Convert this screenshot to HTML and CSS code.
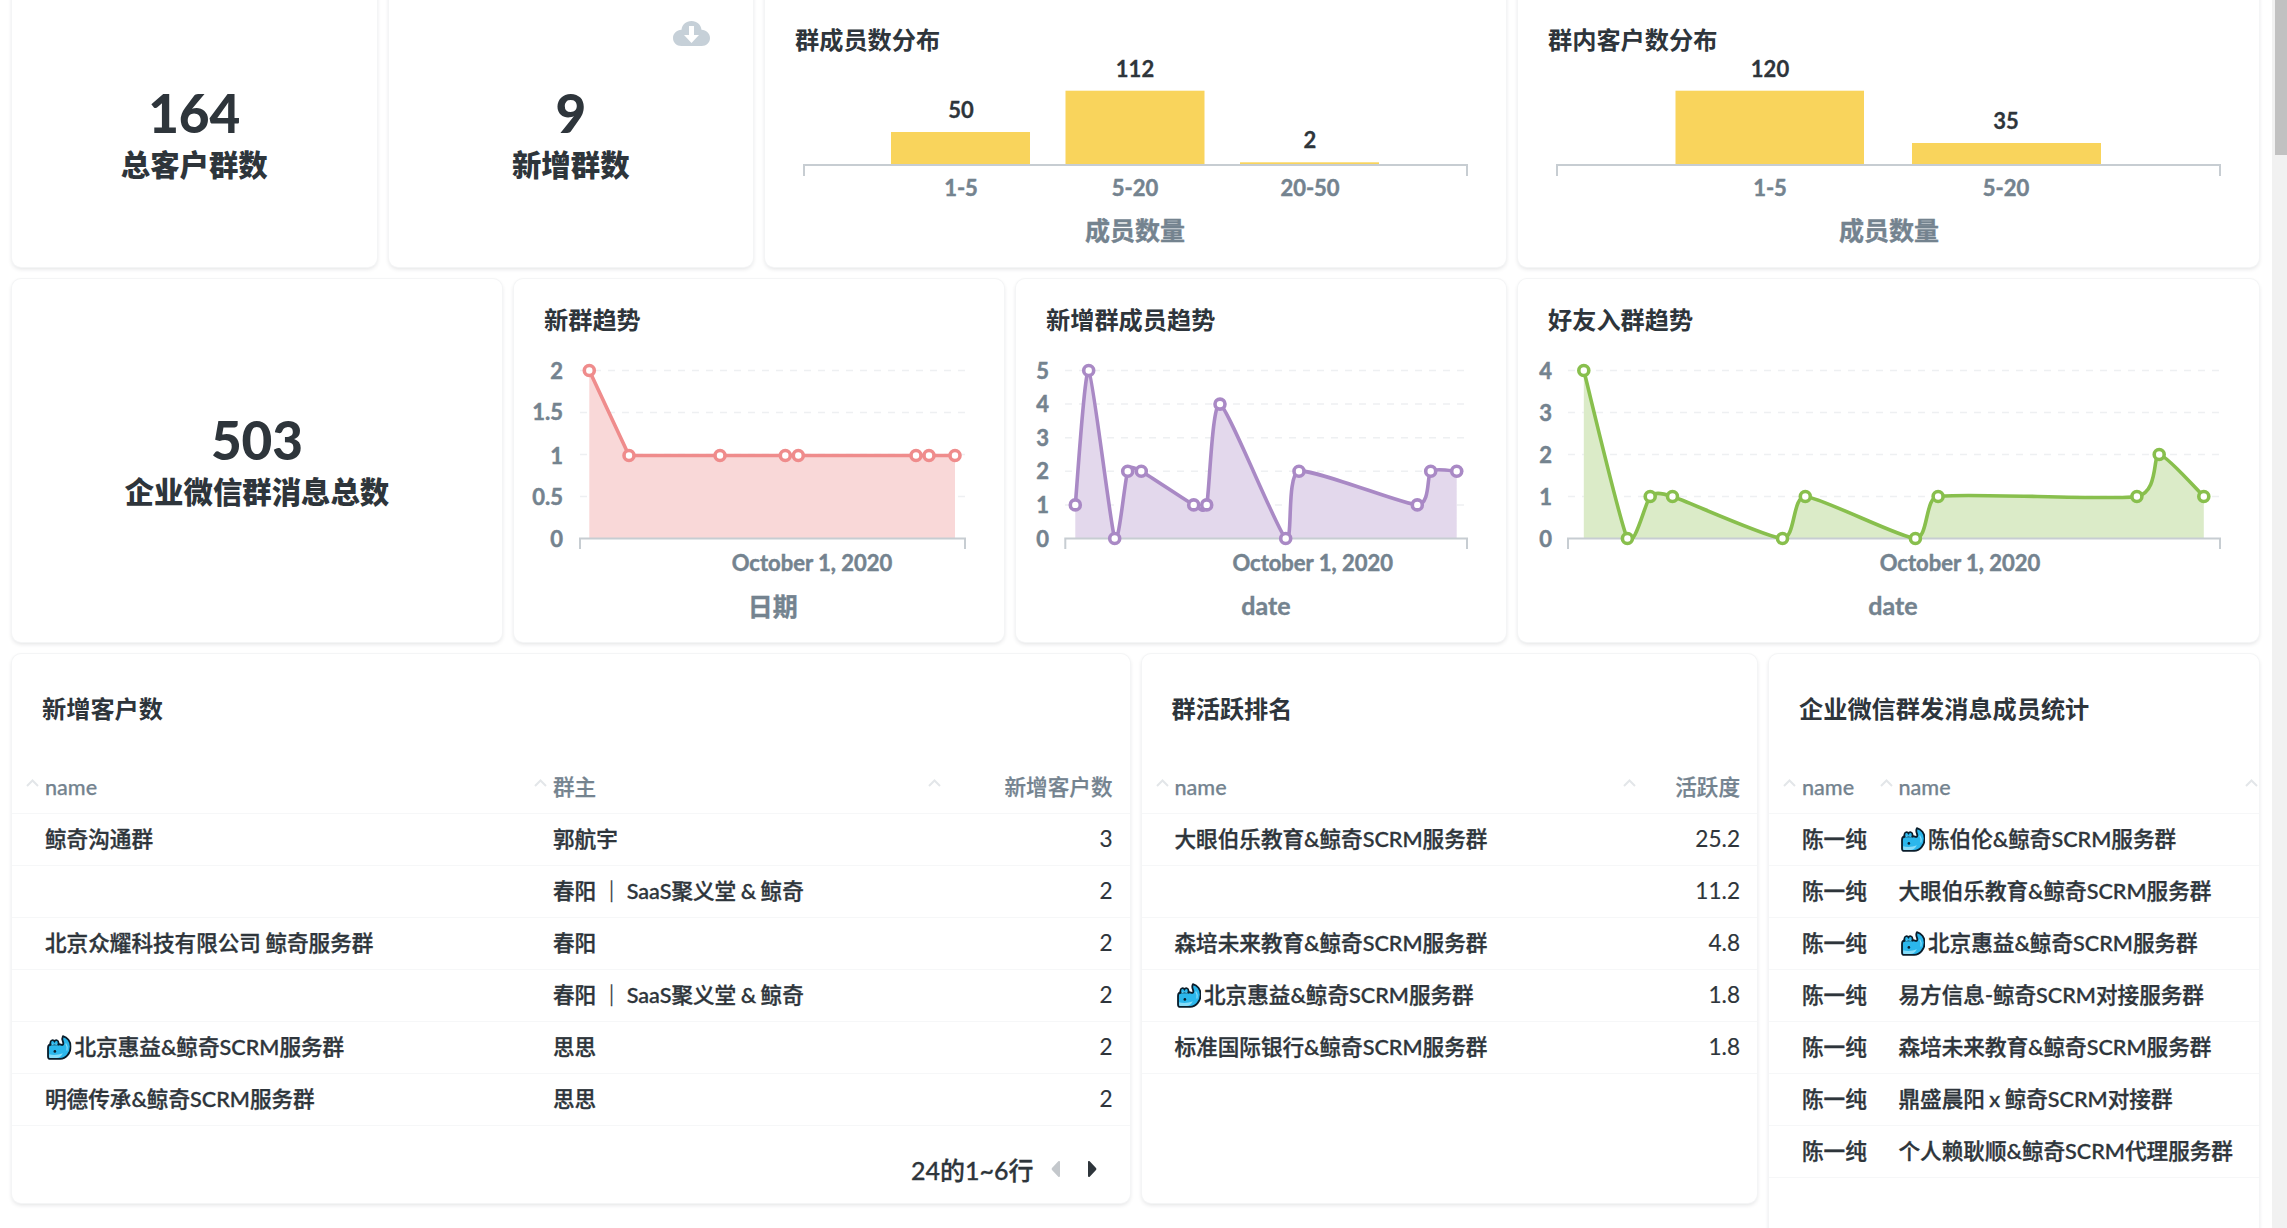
FILE: index.html
```html
<!DOCTYPE html>
<html lang="zh-CN">
<head>
<meta charset="utf-8">
<title>客户群看板</title>
<link rel="stylesheet" href="styles.css">
</head>
<body>
<svg class="defs" width="0" height="0" aria-hidden="true">
  <symbol id="whale" viewBox="0 0 24 24">
    <path d="M15.600 .9c4.200 1 7.600 5 7.600 10.100 0 6.500-4.700 12.200-10.300 12.200H3.300C1.800 23.200 1 22.200 1 20.700v-8.300C1 10.200 2.500 8.800 4.500 8.800h7.600c1.300 0 2.100.9 2.900.7 1.100-.3 1.200-1.700.6-3.200C14.900 4.500 14.700 2.500 15.600 .9z" fill="#2bb7ec" stroke="#0a1d2b" stroke-width="1.800" stroke-linejoin="round"/>
    <path d="M2.100 18.500c3.800 1.300 8.500 1 13.400-.8-1.300 2.900-3.700 4.600-6.300 4.600H3.200c-.7 0-1.100-.4-1.100-1.200z" fill="#86dcf8"/>
    <path d="M3.300 9.400V7.300C3.300 4.700 6.200 4 7.300 5.900 8.400 4 11.300 4.700 11.300 7.300v1.800" fill="#2bb7ec" stroke="#0a1d2b" stroke-width="1.700" stroke-linecap="round"/>
    <path d="M5.600 9.400V8.300M9 9.400V8.300" stroke="#86dcf8" stroke-width="1.200"/>
    <circle cx="7.700" cy="15.800" r="1.300" fill="#0a1d2b"/>
    <path d="M18.500 8.500c1.200 1.800 1.600 4 1 6" fill="none" stroke="#86dcf8" stroke-width="1.100" stroke-linecap="round"/>
  </symbol>
  <symbol id="sort" viewBox="0 0 13 8">
    <path d="M1 7l5.500-5.500L12 7" fill="none" stroke="currentColor" stroke-width="2"/>
  </symbol>
</svg>

<div class="page">
  <main class="board">

    <section class="card span-3 scalar scalar-top">
      <div class="scalar-value">164</div>
      <div class="scalar-label">总客户群数</div>
    </section>

    <section class="card span-3 scalar scalar-top">
      <svg class="download" viewBox="0 0 37 25" aria-hidden="true">
        <path d="M18.500 0c5.500 0 9.500 3.800 10 8.800 4.700.4 8.500 3.700 8.500 8.200 0 4.500-3.600 8-8.300 8H8.300C3.600 25 0 21.500 0 17c0-4.500 3.800-7.800 8.500-8.200C9 3.800 13 0 18.500 0z" fill="#c6d0d8"/>
        <path d="M16 5h5v9h5l-7.500 8L11 14h5z" fill="#fff"/>
      </svg>
      <div class="scalar-value">9</div>
      <div class="scalar-label">新增群数</div>
    </section>

    <section class="card span-6">
      <h2 class="card-title title-top">群成员数分布</h2>
      <svg class="chart" viewBox="765 56 741 211" role="img">
        <rect class="bar" x="891" y="132" width="139" height="33"/>
        <rect class="bar" x="1065.500" y="90.700" width="139" height="74.300"/>
        <rect class="bar" x="1240" y="162.300" width="139" height="2.700"/>
        <path class="axis" d="M804 176V165H1467V176"/>
        <text class="val" x="961" y="118">50</text>
        <text class="val" x="1135" y="77">112</text>
        <text class="val" x="1310" y="148">2</text>
        <text class="tick" x="961" y="196">1-5</text>
        <text class="tick" x="1135" y="196">5-20</text>
        <text class="tick" x="1310" y="196">20-50</text>
        <text class="axis-title" x="1135" y="240">成员数量</text>
      </svg>
    </section>

    <section class="card span-6">
      <h2 class="card-title title-top">群内客户数分布</h2>
      <svg class="chart" viewBox="1518 56 741 211" role="img">
        <rect class="bar" x="1675.500" y="90.700" width="188.500" height="74.300"/>
        <rect class="bar" x="1912" y="143" width="189" height="22"/>
        <path class="axis" d="M1557 176V165H2220V176"/>
        <text class="val" x="1770" y="77">120</text>
        <text class="val" x="2006" y="129">35</text>
        <text class="tick" x="1770" y="196">1-5</text>
        <text class="tick" x="2006" y="196">5-20</text>
        <text class="axis-title" x="1889" y="240">成员数量</text>
      </svg>
    </section>

    <section class="card span-4 scalar scalar-mid">
      <div class="scalar-value">503</div>
      <div class="scalar-label">企业微信群消息总数</div>
    </section>

    <section class="card span-4">
      <h2 class="card-title title-mid">新群趋势</h2>
      <svg class="chart" viewBox="514 336 490 305.500" role="img">
        <path class="grid" d="M580 370.500H965M580 412.500H965M580 454.500H965M580 496.500H965"/>
        <path class="area-red" d="M589.300 370.500L629 455.500H955V538.500H589.300Z"/>
        <path class="axis" d="M580 549V538.500H965V549"/>
        <path class="line line-red" d="M589.300 370.500L629 455.500H955"/>
        <g class="dots dots-red">
          <circle cx="589.300" cy="370.500" r="5"/><circle cx="629" cy="455.500" r="5"/><circle cx="720" cy="455.500" r="5"/><circle cx="785.300" cy="455.500" r="5"/><circle cx="798.300" cy="455.500" r="5"/><circle cx="916" cy="455.500" r="5"/><circle cx="929" cy="455.500" r="5"/><circle cx="955" cy="455.500" r="5"/>
        </g>
        <text class="tick tick-y" x="563" y="378.500">2</text>
        <text class="tick tick-y" x="563" y="419.500">1.5</text>
        <text class="tick tick-y" x="563" y="463.500">1</text>
        <text class="tick tick-y" x="563" y="504.500">0.5</text>
        <text class="tick tick-y" x="563" y="546.500">0</text>
        <text class="tick" x="812" y="571">October 1, 2020</text>
        <text class="axis-title" x="772.700" y="616">日期</text>
      </svg>
    </section>

    <section class="card span-4">
      <h2 class="card-title title-mid">新增群成员趋势</h2>
      <svg class="chart" viewBox="1016 336 490 305.500" role="img">
        <path class="grid" d="M1065 370.500H1467M1065 404.100H1467M1065 437.700H1467M1065 471.300H1467M1065 504.900H1467"/>
        <path class="area-purple" d="M1075.300 504.900C1076.600 491.500 1084.800 367.100 1088.700 370.500C1092.600 373.900 1110.800 528.400 1114.700 538.500C1118.600 548.600 1125 478 1127.700 471.300C1130.400 464.600 1134.700 467.900 1141.300 471.300C1147.900 474.700 1187.200 501.500 1193.700 504.900C1200.200 508.300 1204.100 515 1206.700 504.900C1209.300 494.800 1212.100 400.700 1220 404.100C1227.900 407.500 1277.800 531.800 1285.700 538.500C1293.600 545.200 1285.800 474.700 1299 471.300C1312.200 467.900 1404.100 504.900 1417.300 504.900C1430.500 504.900 1426.800 474.700 1430.700 471.300C1434.600 467.900 1454.100 471.300 1456.700 471.300V538.500H1075.300Z"/>
        <path class="axis" d="M1065.300 549V538.500H1467V549"/>
        <path class="line line-purple" d="M1075.300 504.900C1076.600 491.500 1084.800 367.100 1088.700 370.500C1092.600 373.900 1110.800 528.400 1114.700 538.500C1118.600 548.600 1125 478 1127.700 471.300C1130.400 464.600 1134.700 467.900 1141.300 471.300C1147.900 474.700 1187.200 501.500 1193.700 504.900C1200.200 508.300 1204.100 515 1206.700 504.900C1209.300 494.800 1212.100 400.700 1220 404.100C1227.900 407.500 1277.800 531.800 1285.700 538.500C1293.600 545.200 1285.800 474.700 1299 471.300C1312.200 467.900 1404.100 504.900 1417.300 504.900C1430.500 504.900 1426.800 474.700 1430.700 471.300C1434.600 467.900 1454.100 471.300 1456.700 471.300"/>
        <g class="dots dots-purple">
          <circle cx="1075.300" cy="504.900" r="5"/><circle cx="1088.700" cy="370.500" r="5"/><circle cx="1114.700" cy="538.500" r="5"/><circle cx="1127.700" cy="471.300" r="5"/><circle cx="1141.300" cy="471.300" r="5"/><circle cx="1193.700" cy="504.900" r="5"/><circle cx="1206.700" cy="504.900" r="5"/><circle cx="1220" cy="404.100" r="5"/><circle cx="1285.700" cy="538.500" r="5"/><circle cx="1299" cy="471.300" r="5"/><circle cx="1417.300" cy="504.900" r="5"/><circle cx="1430.700" cy="471.300" r="5"/><circle cx="1456.700" cy="471.300" r="5"/>
        </g>
        <text class="tick tick-y" x="1049" y="378.500">5</text>
        <text class="tick tick-y" x="1049" y="412.100">4</text>
        <text class="tick tick-y" x="1049" y="445.700">3</text>
        <text class="tick tick-y" x="1049" y="479.300">2</text>
        <text class="tick tick-y" x="1049" y="512.900">1</text>
        <text class="tick tick-y" x="1049" y="546.500">0</text>
        <text class="tick" x="1312.700" y="571">October 1, 2020</text>
        <text class="axis-title" x="1266" y="615">date</text>
      </svg>
    </section>

    <section class="card span-6">
      <h2 class="card-title title-mid">好友入群趋势</h2>
      <svg class="chart" viewBox="1518 336 741 305.500" role="img">
        <path class="grid" d="M1568 370.500H2220M1568 412.500H2220M1568 454.500H2220M1568 496.500H2220"/>
        <path class="area-green" d="M1583.800 370.500C1588.200 387.300 1620.800 525.900 1627.400 538.500C1634 551.100 1645.700 500.700 1650.200 496.500C1654.700 492.300 1659.300 492.300 1672.500 496.500C1685.700 500.700 1769.200 538.500 1782.500 538.500C1795.800 538.500 1792 496.500 1805.300 496.500C1818.600 496.500 1902.100 538.500 1915.400 538.500C1928.700 538.500 1924.800 496.500 1938.100 496.500C1960.300 492.300 2114.800 500.700 2136.900 496.500C2159 492.300 2152.500 454.500 2159.200 454.500C2165.900 454.500 2199.300 492.300 2203.800 496.500V538.500H1583.800Z"/>
        <path class="axis" d="M1568 549V538.500H2220V549"/>
        <path class="line line-green" d="M1583.800 370.500C1588.200 387.300 1620.800 525.900 1627.400 538.500C1634 551.100 1645.700 500.700 1650.200 496.500C1654.700 492.300 1659.300 492.300 1672.500 496.500C1685.700 500.700 1769.200 538.500 1782.500 538.500C1795.800 538.500 1792 496.500 1805.300 496.500C1818.600 496.500 1902.100 538.500 1915.400 538.500C1928.700 538.500 1924.800 496.500 1938.100 496.500C1960.300 492.300 2114.800 500.700 2136.900 496.500C2159 492.300 2152.500 454.500 2159.200 454.500C2165.900 454.500 2199.300 492.300 2203.800 496.500"/>
        <g class="dots dots-green">
          <circle cx="1583.800" cy="370.500" r="5"/><circle cx="1627.400" cy="538.500" r="5"/><circle cx="1650.200" cy="496.500" r="5"/><circle cx="1672.500" cy="496.500" r="5"/><circle cx="1782.500" cy="538.500" r="5"/><circle cx="1805.300" cy="496.500" r="5"/><circle cx="1915.400" cy="538.500" r="5"/><circle cx="1938.100" cy="496.500" r="5"/><circle cx="2136.900" cy="496.500" r="5"/><circle cx="2159.200" cy="454.500" r="5"/><circle cx="2203.800" cy="496.500" r="5"/>
        </g>
        <text class="tick tick-y" x="1552" y="378.500">4</text>
        <text class="tick tick-y" x="1552" y="420.500">3</text>
        <text class="tick tick-y" x="1552" y="462.500">2</text>
        <text class="tick tick-y" x="1552" y="504.500">1</text>
        <text class="tick tick-y" x="1552" y="546.500">0</text>
        <text class="tick" x="1960" y="571">October 1, 2020</text>
        <text class="axis-title" x="1893" y="615">date</text>
      </svg>
    </section>

    <section class="card span-9">
      <h2 class="card-title title-table">新增客户数</h2>
      <div class="table cols-customers">
        <div class="row head">
          <div class="th"><svg class="sort"><use href="#sort"/></svg><span>name</span></div>
          <div class="th"><svg class="sort"><use href="#sort"/></svg><span>群主</span></div>
          <div class="th th-num"><svg class="sort"><use href="#sort"/></svg><span>新增客户数</span></div>
        </div>
        <div class="row"><div class="td">鲸奇沟通群</div><div class="td">郭航宇</div><div class="td num">3</div></div>
        <div class="row"><div class="td"></div><div class="td">春阳 ｜ SaaS聚义堂 &amp; 鲸奇</div><div class="td num">2</div></div>
        <div class="row"><div class="td">北京众耀科技有限公司 鲸奇服务群</div><div class="td">春阳</div><div class="td num">2</div></div>
        <div class="row"><div class="td"></div><div class="td">春阳 ｜ SaaS聚义堂 &amp; 鲸奇</div><div class="td num">2</div></div>
        <div class="row"><div class="td"><svg class="whale"><use href="#whale"/></svg>北京惠益&amp;鲸奇SCRM服务群</div><div class="td">思思</div><div class="td num">2</div></div>
        <div class="row"><div class="td">明德传承&amp;鲸奇SCRM服务群</div><div class="td">思思</div><div class="td num">2</div></div>
      </div>
      <footer class="pager">
        <span>24的1~6行</span>
        <svg class="pager-arrow prev" viewBox="0 0 10 18" aria-hidden="true"><path d="M9 2v14a1 1 0 0 1-1.700.7L1 10a1.500 1.500 0 0 1 0-2l6.300-6.700A1 1 0 0 1 9 2z"/></svg>
        <svg class="pager-arrow next" viewBox="0 0 10 18" aria-hidden="true"><path d="M1 2v14a1 1 0 0 0 1.700.7L9 10a1.500 1.500 0 0 0 0-2L2.700 1.300A1 1 0 0 0 1 2z"/></svg>
      </footer>
    </section>

    <section class="card span-5">
      <h2 class="card-title title-table">群活跃排名</h2>
      <div class="table cols-active">
        <div class="row head">
          <div class="th"><svg class="sort"><use href="#sort"/></svg><span>name</span></div>
          <div class="th th-num"><svg class="sort"><use href="#sort"/></svg><span>活跃度</span></div>
        </div>
        <div class="row"><div class="td">大眼伯乐教育&amp;鲸奇SCRM服务群</div><div class="td num">25.2</div></div>
        <div class="row"><div class="td"></div><div class="td num">11.2</div></div>
        <div class="row"><div class="td">森培未来教育&amp;鲸奇SCRM服务群</div><div class="td num">4.8</div></div>
        <div class="row"><div class="td"><svg class="whale"><use href="#whale"/></svg>北京惠益&amp;鲸奇SCRM服务群</div><div class="td num">1.8</div></div>
        <div class="row"><div class="td">标准国际银行&amp;鲸奇SCRM服务群</div><div class="td num">1.8</div></div>
      </div>
    </section>

    <section class="card span-4 card-tall">
      <h2 class="card-title title-table">企业微信群发消息成员统计</h2>
      <div class="table cols-members">
        <div class="row head">
          <div class="th"><svg class="sort"><use href="#sort"/></svg><span>name</span></div>
          <div class="th"><svg class="sort"><use href="#sort"/></svg><span>name</span></div>
          <div class="th"><svg class="sort"><use href="#sort"/></svg></div>
        </div>
        <div class="row"><div class="td">陈一纯</div><div class="td"><svg class="whale"><use href="#whale"/></svg>陈伯伦&amp;鲸奇SCRM服务群</div><div class="td"></div></div>
        <div class="row"><div class="td">陈一纯</div><div class="td">大眼伯乐教育&amp;鲸奇SCRM服务群</div><div class="td"></div></div>
        <div class="row"><div class="td">陈一纯</div><div class="td"><svg class="whale"><use href="#whale"/></svg>北京惠益&amp;鲸奇SCRM服务群</div><div class="td"></div></div>
        <div class="row"><div class="td">陈一纯</div><div class="td">易方信息-鲸奇SCRM对接服务群</div><div class="td"></div></div>
        <div class="row"><div class="td">陈一纯</div><div class="td">森培未来教育&amp;鲸奇SCRM服务群</div><div class="td"></div></div>
        <div class="row"><div class="td">陈一纯</div><div class="td">鼎盛晨阳 x 鲸奇SCRM对接群</div><div class="td"></div></div>
        <div class="row"><div class="td">陈一纯</div><div class="td">个人赖耿顺&amp;鲸奇SCRM代理服务群</div><div class="td"></div></div>
      </div>
    </section>

  </main>
  <aside class="scrollbar"><div class="scrollbar-thumb"></div></aside>
</div>
</body>
</html>
```

FILE: styles.css
```css
* { box-sizing: border-box; }

html, body {
  margin: 0;
  height: 100%;
  overflow: hidden;
  background: #fff;
}

body {
  font-family: Lato, "Noto Sans CJK SC", sans-serif;
  color: #2e353b;
}

.defs { position: absolute; }

.page {
  display: flex;
  height: 1228px;
  overflow: hidden;
}

.board {
  flex: 1;
  display: grid;
  grid-template-columns: repeat(18, 113.5px);
  grid-template-rows: 280px 362.5px 549px;
  gap: 12px;
  margin-top: -13px;
  padding-left: 12px;
  align-content: start;
}

.scrollbar {
  flex: 0 0 15px;
  background: #f1f1f1;
  padding-left: 3px;
}

.scrollbar-thumb {
  height: 155px;
  background: #c1c1c1;
}

.card {
  position: relative;
  display: flex;
  flex-direction: column;
  background: #fff;
  border-radius: 9px;
  box-shadow: 0 0 0 1px #f4f5f6, 0 2px 4px rgba(46, 53, 59, .14);
  min-width: 0;
}

.span-3 { grid-column: span 3; }
.span-4 { grid-column: span 4; }
.span-5 { grid-column: span 5; }
.span-6 { grid-column: span 6; }
.span-9 { grid-column: span 9; }

.card-tall {
  height: 640px;
  align-self: start;
}

/* Scalars */
.scalar {
  align-items: center;
  justify-content: center;
}

.scalar-top { padding-top: 24px; }
.scalar-mid { padding-top: 12px; }

.scalar-value {
  font-size: 53px;
  font-weight: 900;
  line-height: 52px;
}

.scalar-label {
  font-size: 29.4px;
  font-weight: 900;
  line-height: 52px;
}

.download {
  position: absolute;
  top: 34px;
  right: 43px;
  width: 37px;
  height: 25px;
}

/* Titles */
.card-title {
  margin: 0;
  padding-left: 30px;
  font-size: 24.2px;
  font-weight: 700;
  line-height: 30px;
}

.title-top { padding-top: 38px; margin-bottom: 1px; }
.title-mid { padding-top: 26px; margin-bottom: 1px; }
.title-table { padding-top: 40px; margin-bottom: 38px; }

/* Charts */
.chart {
  display: block;
  flex: 1;
  width: 100%;
  min-height: 0;
}

.bar { fill: #f9d45c; }

.axis {
  fill: none;
  stroke: #c7cdd2;
  stroke-width: 2;
}

.grid {
  fill: none;
  stroke: #eef0f2;
  stroke-width: 1.5;
  stroke-dasharray: 7 7;
}

.val {
  font-size: 22px;
  font-weight: 700;
  fill: #2e353b;
  stroke: #2e353b;
  stroke-width: .3;
  text-anchor: middle;
}

.tick {
  font-size: 22px;
  font-weight: 700;
  fill: #74838f;
  stroke: #74838f;
  stroke-width: .5;
  text-anchor: middle;
}

.tick-y { text-anchor: end; }

.axis-title {
  font-size: 25px;
  font-weight: 700;
  fill: #74838f;
  stroke: #74838f;
  stroke-width: .4;
  text-anchor: middle;
}

.line {
  fill: none;
  stroke-width: 3.6;
}

.dots circle {
  fill: #fff;
  stroke-width: 3.6;
}

.area-red { fill: #f9d8d8; }
.line-red, .dots-red circle { stroke: #ef8c8c; }
.area-purple { fill: #e3d8ec; }
.line-purple, .dots-purple circle { stroke: #a989c5; }
.area-green { fill: #dbebc8; }
.line-green, .dots-green circle { stroke: #88bf4d; }

/* Tables */
.table {
  font-size: 21.6px;
  line-height: 26px;
}

.row {
  display: grid;
  height: 52px;
  align-items: center;
  border-bottom: 1px solid #f6f7f8;
}

.cols-customers .row { grid-template-columns: 508px 394px 1fr; }
.cols-active .row { grid-template-columns: 467px 1fr; }
.cols-members .row { grid-template-columns: 96.5px 365px 1fr; }

.th {
  display: flex;
  align-items: center;
  gap: 6px;
  padding-left: 14px;
  color: #74838f;
  font-weight: 500;
  -webkit-text-stroke: .25px #74838f;
  white-space: nowrap;
}

.th-num {
  justify-content: space-between;
  padding-right: 17px;
}

.sort {
  flex: none;
  width: 13px;
  height: 8px;
  margin-top: -9px;
  color: #e3e6e9;
}

.td {
  display: flex;
  align-items: center;
  padding-left: 33px;
  font-weight: 500;
  word-spacing: -1px;
  -webkit-text-stroke: .35px #2e353b;
  white-space: pre;
  min-width: 0;
}

.num {
  justify-content: flex-end;
  padding-left: 0;
  padding-right: 17px;
  font-weight: 400;
  font-size: 22.6px;
  -webkit-text-stroke: .15px #2e353b;
}

.whale {
  flex: none;
  width: 24.5px;
  height: 25px;
  margin-left: 2px;
  margin-right: 3px;
}

/* Pagination */
.pager {
  display: flex;
  align-items: center;
  justify-content: flex-end;
  margin-top: auto;
  padding: 0 33px 18px 0;
  height: 48px;
  font-size: 25px;
  line-height: 30px;
  font-weight: 500;
  -webkit-text-stroke: .3px #2e353b;
}

.pager-arrow {
  width: 10px;
  height: 18px;
  margin-top: -2px;
}

.prev { margin-left: 17px; fill: #c4c8cc; }
.next { margin-left: 26px; fill: #2e353b; }
```
